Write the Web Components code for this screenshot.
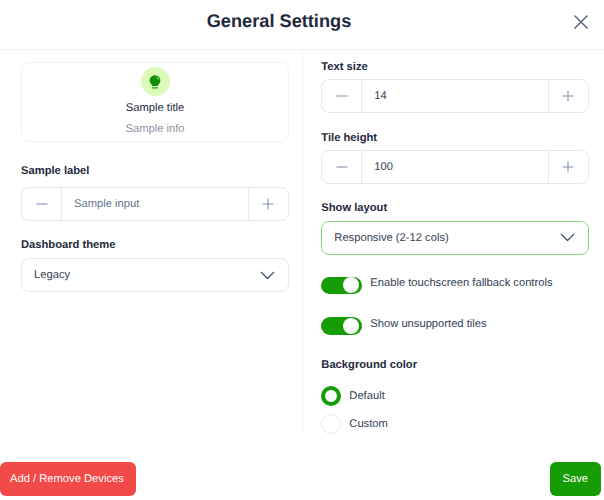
<!DOCTYPE html>
<html lang="en">
<head>
<meta charset="utf-8">
<title>General Settings</title>
<style>
  html, body { margin: 0; padding: 0; background: #fff; }
  body { font-family: "Liberation Sans", Arial, sans-serif; color: #1e293b; text-rendering: geometricPrecision; }
</style>
</head>
<body>
<settings-dialog heading="General Settings">
  <div slot="left">
    <sample-tile title-text="Sample title" info="Sample info"></sample-tile>
    <form-field label="Sample label" nudge style="margin-top:20px">
      <number-stepper value="Sample input" muted style="margin-top:7px"></number-stepper>
    </form-field>
    <form-field label="Dashboard theme" style="margin-top:16px">
      <select-box value="Legacy"></select-box>
    </form-field>
  </div>
  <div slot="right">
    <form-field label="Text size" nudge>
      <number-stepper value="14"></number-stepper>
    </form-field>
    <form-field label="Tile height" nudge style="margin-top:15.5px">
      <number-stepper value="100"></number-stepper>
    </form-field>
    <form-field label="Show layout" style="margin-top:16px">
      <select-box value="Responsive (2-12 cols)" focused></select-box>
    </form-field>
    <toggle-row label="Enable touchscreen fallback controls" style="margin-top:22px"></toggle-row>
    <toggle-row label="Show unsupported tiles" style="margin-top:23px"></toggle-row>
    <form-field label="Background color" style="margin-top:22px">
      <radio-option label="Default" checked style="margin-top:12px"></radio-option>
      <radio-option label="Custom" style="margin-top:8px"></radio-option>
    </form-field>
  </div>
  <app-button slot="footer-start" color="#f24949" pad="0 12.5px 0 10px">Add / Remove Devices</app-button>
  <app-button slot="footer-end" color="#169c05" pad="0 13px">Save</app-button>
</settings-dialog>

<script>
/** Attach an open shadow root holding the given markup. */
function attach(element, html) {
  const root = element.attachShadow({ mode: 'open' });
  root.innerHTML = html;
  return root;
}

class SettingsDialog extends HTMLElement {
  connectedCallback() {
    attach(this, `<style>
      :host { display: flex; flex-direction: column; width: 604px; height: 500px; box-sizing: border-box; background: #fff; }
      header { flex: none; height: 49px; border-bottom: 1px solid #f1f3f6; display: flex; align-items: center; justify-content: center; position: relative; }
      h1 { margin: 0 46px 7px 0; font-size: 18.2px; line-height: 28px; font-weight: 700; color: #1e293b; }
      .close { position: absolute; right: 13.5px; top: 11.5px; width: 20px; height: 20px; display: block; }
      .body { flex: none; height: 382px; display: grid; grid-template-columns: 302px 302px; grid-template-rows: 382px; }
      .col { box-sizing: border-box; min-width: 0; min-height: 0; }
      .left { padding: 12px 13px 0 21px; border-right: 1px solid #f1f3f6; width: 303px; }
      .right { padding: 8px 15px 0 19.3px; }
      footer { flex: none; display: flex; justify-content: space-between; padding: 29.5px 3px 0 0; }
    </style>
    <header>
      <h1>${this.getAttribute('heading')}</h1>
      <svg class="close" viewBox="0 0 20 20" fill="none" stroke="#475a75" stroke-width="1.3"><path d="M3.5 3.5 16.5 16.5M16.5 3.5 3.5 16.5"/></svg>
    </header>
    <div class="body">
      <div class="col left"><slot name="left"></slot></div>
      <div class="col right"><slot name="right"></slot></div>
    </div>
    <footer><slot name="footer-start"></slot><slot name="footer-end"></slot></footer>`);
  }
}

class SampleTile extends HTMLElement {
  connectedCallback() {
    attach(this, `<style>
      :host { display: flex; flex-direction: column; align-items: center; box-sizing: border-box; height: 80px; border: 1px solid #f1f3f6; border-radius: 8px; padding-top: 4px; font-size: 11.2px; }
      .badge { width: 29px; height: 29px; border-radius: 50%; background: #dcfaba; display: flex; align-items: center; justify-content: center; }
      .title { margin-top: 4.3px; line-height: 16px; color: #1e293b; }
      .info { margin-top: 5px; line-height: 16px; color: #8b90a0; }
    </style>
    <div class="badge">
      <svg width="14" height="14" viewBox="0 0 14 14">
        <path fill="#0f8f00" d="M7 .2a5.4 5.4 0 0 0-5.4 5.4c0 1.9 1 2.9 1.9 3.8.5.5.8 1 .9 1.6h5.2c.1-.6.4-1.1.9-1.6.9-.9 1.9-1.9 1.9-3.8A5.4 5.4 0 0 0 7 .2z"/>
        <path fill="none" stroke="#dcfaba" stroke-width=".9" d="M8.6 2.2c1 .4 1.8 1.2 2 2.2"/>
        <path fill="none" stroke="#0f8f00" stroke-width="1.1" d="M4 12.9h6"/>
      </svg>
    </div>
    <div class="title">${this.getAttribute('title-text')}</div>
    <div class="info">${this.getAttribute('info')}</div>`);
  }
}

class FormField extends HTMLElement {
  connectedCallback() {
    // nudge: the label text sits a pixel lower above some controls
    const spacing = this.hasAttribute('nudge')
      ? 'padding-top: 1px; margin-bottom: 3px;'
      : 'margin-bottom: 4px;';
    attach(this, `<style>
      :host { display: block; }
      label { display: block; font-size: 11.2px; line-height: 17px; font-weight: 700; color: #1e293b; ${spacing} }
    </style>
    <label>${this.getAttribute('label')}</label><slot></slot>`);
  }
}

class NumberStepper extends HTMLElement {
  connectedCallback() {
    const color = this.hasAttribute('muted') ? '#64748b' : '#334155';
    attach(this, `<style>
      :host { display: flex; box-sizing: border-box; height: 34px; border: 1px solid #e2e8f0; border-radius: 8px; font-size: 11.2px; background: #fff; }
      .btn { flex: none; width: 39.5px; display: flex; align-items: center; justify-content: center; }
      .btn.minus { width: 39px; }
      .value { flex: 1; border-left: 1px solid #e2e8f0; border-right: 1px solid #e2e8f0; padding-left: 12px; line-height: 32px; color: ${color}; }
      svg { width: 14px; height: 14px; display: block; }
    </style>
    <div class="btn minus"><svg viewBox="0 0 14 14" stroke="#8494ad" stroke-width="1.1"><path d="M1.5 7h11"/></svg></div>
    <div class="value">${this.getAttribute('value')}</div>
    <div class="btn"><svg viewBox="0 0 14 14" stroke="#8494ad" stroke-width="1.1" fill="none"><path d="M1.5 7h11M7 1.5v11"/></svg></div>`);
  }
}

class SelectBox extends HTMLElement {
  connectedCallback() {
    const border = this.hasAttribute('focused') ? '#8ad47f' : '#e2e8f0';
    attach(this, `<style>
      :host { display: flex; align-items: center; justify-content: space-between; box-sizing: border-box; height: 34px; border: 1px solid ${border}; border-radius: 8px; padding: 0 13px 0 12px; font-size: 11.2px; color: #334155; background: #fff; }
      svg { width: 15px; height: 9px; display: block; }
    </style>
    <span>${this.getAttribute('value')}</span>
    <svg viewBox="0 0 15 9" fill="none" stroke="#475a75" stroke-width="1.4"><path d="M1 1l6.5 6.5L14 1"/></svg>`);
  }
}

class ToggleRow extends HTMLElement {
  connectedCallback() {
    attach(this, `<style>
      :host { display: flex; align-items: flex-start; gap: 8px; font-size: 11.2px; line-height: 16px; color: #334155; }
      .track { flex: none; width: 41px; height: 17.5px; border-radius: 9px; background: #169c05; position: relative; }
      .knob { position: absolute; right: 3.5px; top: .75px; width: 16px; height: 16px; border-radius: 50%; background: #fff; }
      span { margin-top: -1.5px; }
    </style>
    <div class="track"><div class="knob"></div></div>
    <span>${this.getAttribute('label')}</span>`);
  }
}

class RadioOption extends HTMLElement {
  connectedCallback() {
    const dot = this.hasAttribute('checked')
      ? 'border: 4px solid #169c05;'
      : 'border: 1px solid #e2e8f0;';
    attach(this, `<style>
      :host { display: flex; align-items: center; gap: 8px; font-size: 11.2px; color: #334155; }
      .dot { flex: none; width: 20px; height: 20px; box-sizing: border-box; border-radius: 50%; background: #fff; ${dot} }
    </style>
    <div class="dot"></div><span>${this.getAttribute('label')}</span>`);
  }
}

class AppButton extends HTMLElement {
  connectedCallback() {
    attach(this, `<style>
      :host { display: inline-flex; align-items: center; box-sizing: border-box; height: 34px; padding: ${this.getAttribute('pad')}; border-radius: 6px; font-size: 11.2px; color: #fff; background: ${this.getAttribute('color')}; }
    </style><slot></slot>`);
  }
}

customElements.define('settings-dialog', SettingsDialog);
customElements.define('sample-tile', SampleTile);
customElements.define('form-field', FormField);
customElements.define('number-stepper', NumberStepper);
customElements.define('select-box', SelectBox);
customElements.define('toggle-row', ToggleRow);
customElements.define('radio-option', RadioOption);
customElements.define('app-button', AppButton);
</script>
</body>
</html>
